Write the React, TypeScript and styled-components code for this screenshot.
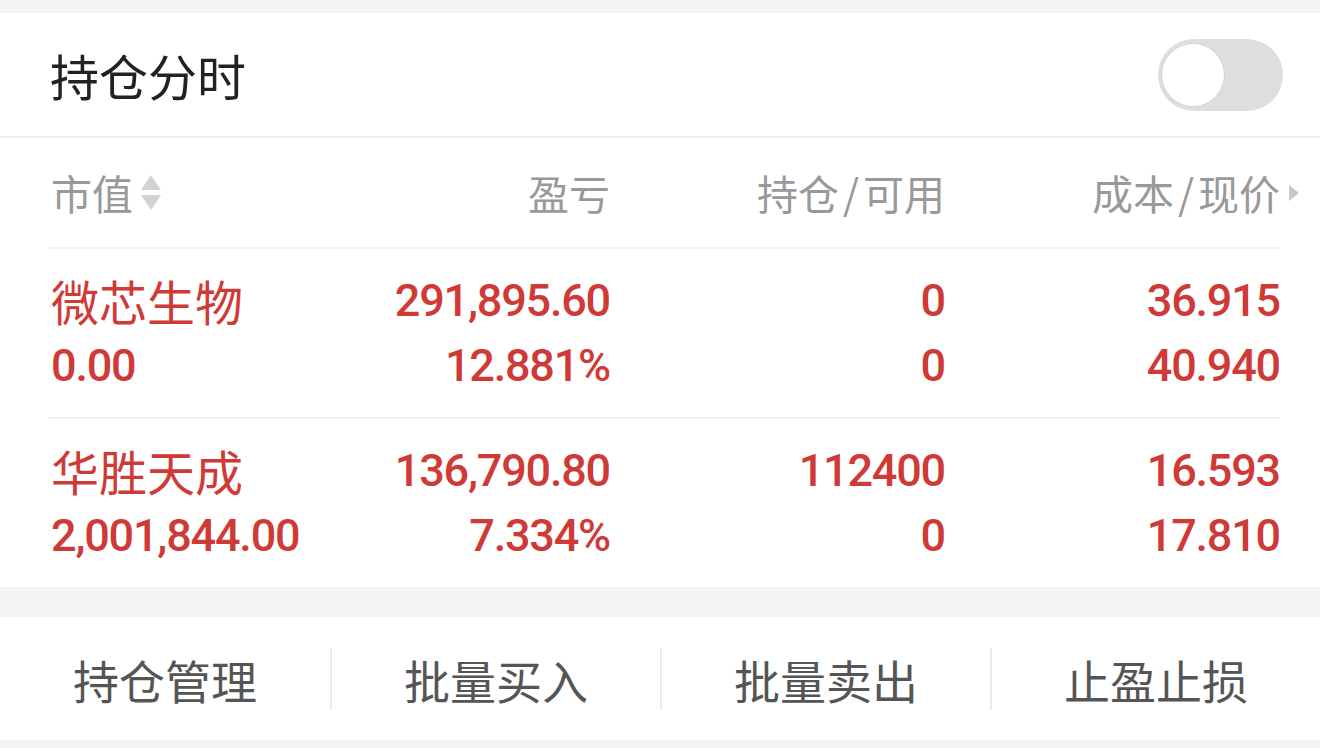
import React from "react";
import styled, { createGlobalStyle } from "styled-components";

const GlobalStyle = createGlobalStyle`
    html, body {
        margin: 0;
        padding: 0;
        background-color: #f4f4f4;
        font-family: "Noto Sans CJK SC", "Noto Sans", sans-serif;
    }
`;

type Holding = {
    name: string;
    marketValue: string;
    profit: string;
    profitRate: string;
    position: string;
    available: string;
    cost: string;
    price: string;
};

const holdings: Holding[] = [
    {
        name: "微芯生物",
        marketValue: "0.00",
        profit: "291,895.60",
        profitRate: "12.881%",
        position: "0",
        available: "0",
        cost: "36.915",
        price: "40.940",
    },
    {
        name: "华胜天成",
        marketValue: "2,001,844.00",
        profit: "136,790.80",
        profitRate: "7.334%",
        position: "112400",
        available: "0",
        cost: "16.593",
        price: "17.810",
    },
];

const actions = ["持仓管理", "批量买入", "批量卖出", "止盈止损"];

export default function App() {
    const [isOn, setIsOn] = React.useState(false);

    return (
        <>
            <GlobalStyle />
            <Page>
                <Card>
                    <Header>
                        <Title>持仓分时</Title>
                        <Toggle active={isOn} onClick={() => setIsOn(!isOn)}>
                            <Knob active={isOn} />
                        </Toggle>
                    </Header>

                    <Table>
                        <HeadRow>
                            <HeadCell>
                                市值
                                <SortIcon width="24" height="40" viewBox="0 0 24 40">
                                    <path d="M12 2 L22 17 L2 17 Z" fill="#d2d2d2" />
                                    <path d="M2 22 L22 22 L12 37 Z" fill="#d2d2d2" />
                                </SortIcon>
                            </HeadCell>
                            <HeadCell align="right">盈亏</HeadCell>
                            <HeadCell align="right">
                                持仓<Slash>/</Slash>可用
                            </HeadCell>
                            <HeadCell align="right">
                                成本<Slash>/</Slash>现价
                                <MoreIcon width="12" height="20" viewBox="0 0 12 20">
                                    <path d="M1 2 L11 10 L1 18 Z" fill="#c8c8c8" />
                                </MoreIcon>
                            </HeadCell>
                        </HeadRow>

                        {holdings.map((h, i) => (
                            <DataRow key={h.name} last={i === holdings.length - 1}>
                                <Cell>
                                    <StockName>{h.name}</StockName>
                                    <Num>{h.marketValue}</Num>
                                </Cell>
                                <Cell align="right">
                                    <Num>{h.profit}</Num>
                                    <Num>{h.profitRate}</Num>
                                </Cell>
                                <Cell align="right">
                                    <Num>{h.position}</Num>
                                    <Num>{h.available}</Num>
                                </Cell>
                                <Cell align="right">
                                    <Num>{h.cost}</Num>
                                    <Num>{h.price}</Num>
                                </Cell>
                            </DataRow>
                        ))}
                    </Table>
                </Card>

                <ActionBar>
                    {actions.map((a, i) => (
                        <ActionButton key={a} first={i === 0}>{a}</ActionButton>
                    ))}
                </ActionBar>
            </Page>
        </>
    );
}

const Page = styled.div`
    width: 1320px;
    height: 748px;
    padding-top: 13px;
    box-sizing: border-box;
    background-color: #f4f4f4;
    overflow: hidden;
`;

const Card = styled.div`
    background-color: #fff;
`;

const Header = styled.div`
    display: flex;
    flex-direction: row;
    justify-content: space-between;
    align-items: center;
    height: 123px;
    padding: 0 37px 0 50px;
    border-bottom: solid 2px #ededed;
`;

const Title = styled.div`
    font-size: 49px;
    color: #222;
    line-height: 1;
`;

const Toggle = styled.div.attrs((props: { active: boolean }) => ({
    active: props.active
}))`
    display: flex;
    align-items: center;
    justify-content: ${props => props.active ? "flex-end" : "flex-start"};
    width: 125px;
    height: 72px;
    padding: 0 4px;
    box-sizing: border-box;
    border-radius: 36px;
    background-color: ${props => props.active ? "#d0373a" : "#dedede"};
    cursor: pointer;
`;

const Knob = styled.div.attrs((props: { active: boolean }) => ({
    active: props.active
}))`
    width: 62px;
    height: 62px;
    border-radius: 50%;
    background-color: #fff;
    box-shadow: 0 0 0 1px #d4d4d4;
`;

const Table = styled.div`
    padding: 0 40px 0 48px;
`;

const HeadRow = styled.div`
    display: grid;
    grid-template-columns: 282px 280px 335px 1fr;
    align-items: center;
    height: 109px;
    border-bottom: solid 2px #f0f0f0;
`;

const HeadCell = styled.div.attrs((props: { align?: string }) => ({
    align: props.align
}))`
    display: flex;
    align-items: center;
    justify-content: ${props => props.align === "right" ? "flex-end" : "flex-start"};
    font-size: 41px;
    color: #999;
    line-height: 1;
    padding-left: 3px;
`;

const Slash = styled.span`
    margin: 0 4px;
`;

const SortIcon = styled.svg`
    margin-left: 6px;
`;

const MoreIcon = styled.svg`
    margin-left: 8px;
    margin-right: -20px;
`;

const DataRow = styled.div.attrs((props: { last: boolean }) => ({
    last: props.last
}))`
    display: grid;
    grid-template-columns: 282px 280px 335px 1fr;
    padding: 19px 0;
    border-bottom: ${props => props.last ? "none" : "solid 2px #f0f0f0"};
`;

const Cell = styled.div.attrs((props: { align?: string }) => ({
    align: props.align
}))`
    display: flex;
    flex-direction: column;
    align-items: ${props => props.align === "right" ? "flex-end" : "flex-start"};
    padding-left: 3px;
`;

const StockName = styled.div`
    height: 65px;
    line-height: 65px;
    font-size: 48px;
    color: #cf3a37;
`;

const Num = styled.div`
    height: 65px;
    line-height: 65px;
    font-family: "Roboto", "Liberation Sans", sans-serif;
    font-size: 45px;
    font-weight: 500;
    color: #cf3a37;
    letter-spacing: -1.2px;
`;

const ActionBar = styled.div`
    display: grid;
    grid-template-columns: repeat(4, 1fr);
    align-items: center;
    height: 123px;
    margin-top: 30px;
    background-color: #fff;
`;

const ActionButton = styled.div.attrs((props: { first: boolean }) => ({
    first: props.first
}))`
    display: flex;
    justify-content: center;
    align-items: center;
    height: 62px;
    font-size: 46px;
    color: #555;
    border-left: ${props => props.first ? "none" : "solid 2px #ebebeb"};
    cursor: pointer;
`;
